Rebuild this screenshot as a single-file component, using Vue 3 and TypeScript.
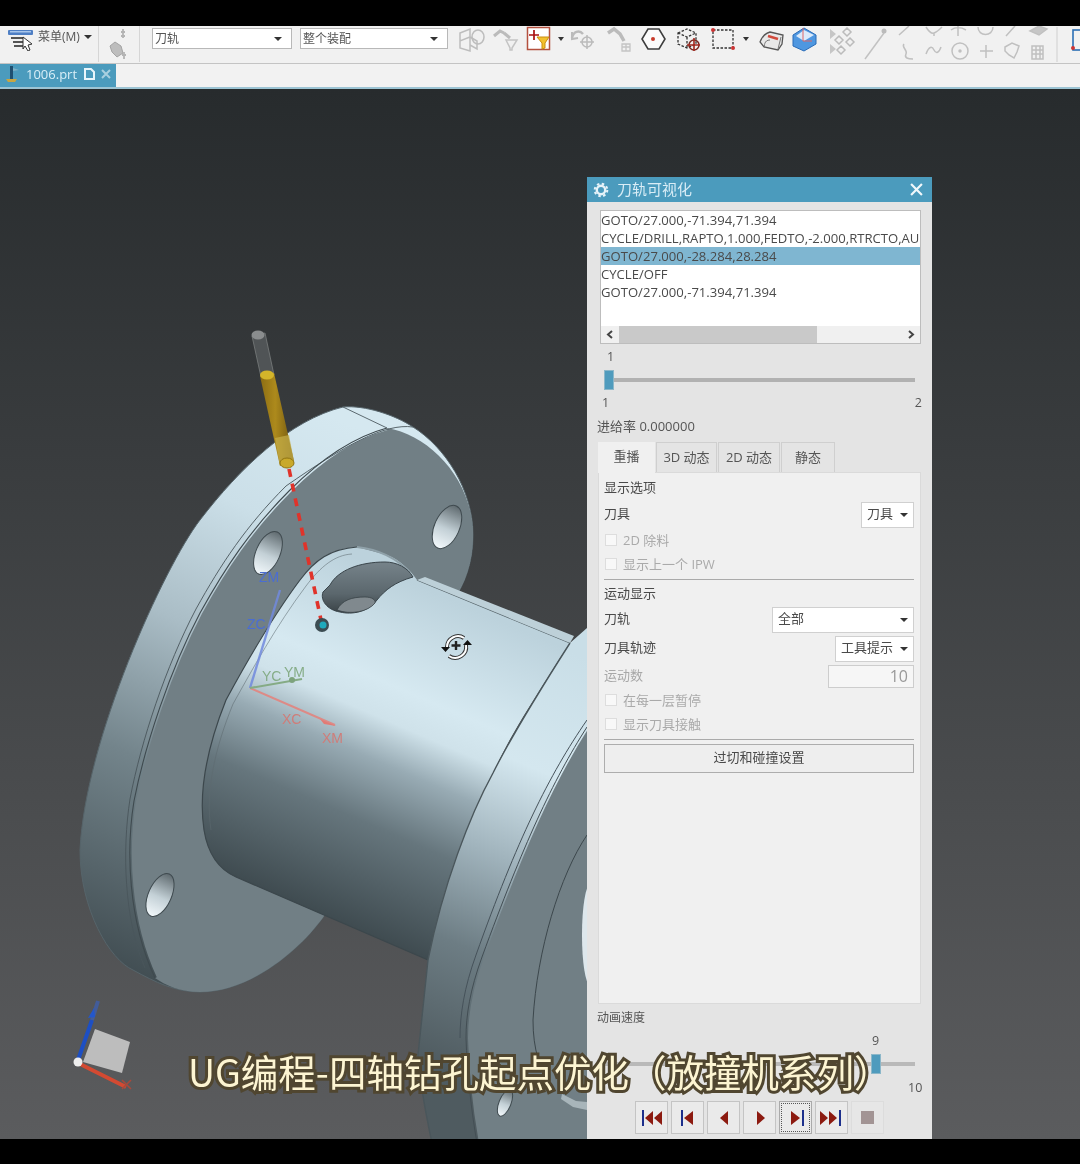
<script setup lang="ts">
interface Btn { d: string; blue: string; disabled?: boolean; focus?: boolean }
const rows: string[] = [
  'GOTO/27.000,-71.394,71.394',
  'CYCLE/DRILL,RAPTO,1.000,FEDTO,-2.000,RTRCTO,AU',
  'GOTO/27.000,-28.284,28.284',
  'CYCLE/OFF',
  'GOTO/27.000,-71.394,71.394'
]
const tabs: string[] = ['重播', '3D 动态', '2D 动态', '静态']
const buttons: Btn[] = [
  { d: 'M8 12l8-7v14zM17 12l8-7v14z', blue: 'M5 4h2v16H5z' },
  { d: 'M11 12l9-7v14z', blue: 'M8 4h2v16H8z' },
  { d: 'M11 12l8-7v14z', blue: '' },
  { d: 'M12 5l8 7-8 7z', blue: '' },
  { d: 'M10 5l9 7-9 7z', blue: 'M21 4h2v16h-2z', focus: true },
  { d: 'M3 5l8 7-8 7zM12 5l8 7-8 7z', blue: 'M22 4h2v16h-2z' },
  { d: '', blue: '', disabled: true }
]
</script>

<template>
  <div class="page">
    <div class="black top"></div>

    <div class="toolbar">
      <svg class="menu-icon" viewBox="0 0 26 22" width="26" height="22">
        <rect x="0" y="1" width="25" height="5" rx="1" fill="#4f7fc4" />
        <rect x="2" y="2" width="21" height="1.500" fill="#a9c6ea" />
        <path d="M3 9h13M5 13h10M6 17h9" stroke="#555" stroke-width="2" />
        <path d="M15 8l9 7-4 1 2 5-2 1-3-5-2 3z" fill="#fff" stroke="#333" />
      </svg>
      <span class="menu-text">菜单(M)</span>
      <span class="caret menu-caret"></span>
      <i class="vsep first"></i>
      <svg class="grey-icon" viewBox="0 0 18 32" width="18" height="32" fill="none">
        <path d="M14 1v9M12 4h4M12 8h4" stroke="#b4b4b4" stroke-width="1.800" />
        <path d="M1 18l5-4 6 4 2 7-6 4-5-5z" fill="#bdbdbd" stroke="#a4a4a4" />
        <path d="M15 24v7M13 27h4" stroke="#b4b4b4" stroke-width="1.800" />
      </svg>
      <i class="vsep second"></i>
      <div class="tcombo one"><span>刀轨</span><b class="caret"></b></div>
      <div class="tcombo two"><span>整个装配</span><b class="caret"></b></div>
      <svg class="strip" viewBox="457 26 623 38" width="623" height="38" fill="none">
        <g stroke="#bdbdbd" stroke-width="1.500">
          <path d="M460 33l10-4v8l-10 4zM470 37l7 4v8l-7-4zM460 41v7l10 3v-14" />
          <ellipse cx="478" cy="37" rx="6" ry="7" />
        </g>
        <path d="M494 36l6-5 4 2M504 33l6 5" stroke="#bbb" stroke-width="3" />
        <path d="M506 40h11l-5 8v2h-2v-2z" stroke="#c4c4c4" stroke-width="1.500" />
        <rect x="527.500" y="27.500" width="22" height="22" fill="#fff" stroke="#b4513f" stroke-width="1.500" />
        <path d="M534 30v10M529 35h10" stroke="#a11" stroke-width="1.700" />
        <path d="M537 37h12l-4 6v5l-3 1v-6z" fill="#f2c12e" stroke="#c98d12" />
        <path d="M558 37l3 4 3-4z" fill="#333" />
        <path d="M572 38c1-6 7-9 11-4" stroke="#bbb" stroke-width="2.400" />
        <path d="M572 32l0 7 6-1" stroke="#bbb" stroke-width="2" />
        <circle cx="587" cy="42" r="5" stroke="#bbb" stroke-width="1.500" />
        <path d="M587 35v14M580 42h14" stroke="#bbb" stroke-width="1.500" />
        <path d="M608 33l6-4 6 5 4 7" stroke="#bbb" stroke-width="3.500" />
        <path d="M622 44h8v7h-8zM626 44v7M622 47h8" stroke="#c4c4c4" stroke-width="1.300" />
        <path d="M648 29h11l6 10-6 10h-11l-6-10z" stroke="#3d3d3d" stroke-width="1.600" fill="#fbfbfb" />
        <circle cx="653" cy="39" r="2" fill="#c83a2a" />
        <path d="M678 33l9-4 9 4v11l-9 4-9-4zM678 33l9 4 9-4M687 37v11" stroke="#333" stroke-dasharray="2.500 1.500" stroke-width="1.300" />
        <circle cx="694" cy="45" r="5" stroke="#7a2a22" stroke-width="1.500" />
        <path d="M694 38v13M687 45h13" stroke="#a4281f" stroke-width="1.600" />
        <rect x="713" y="30" width="20" height="18" stroke="#333" stroke-dasharray="2.500 1.500" stroke-width="1.300" />
        <circle cx="713" cy="30" r="2" fill="#c33" /><circle cx="733" cy="48" r="2" fill="#c33" />
        <path d="M743 37l3 4 3-4z" fill="#333" />
        <path d="M760 42c2-5 6-9 10-10l13 3-1 9-4 6-14-3z" fill="#e8e8e8" stroke="#555" stroke-width="1.300" />
        <path d="M768 36l10 3" stroke="#d14a3c" stroke-width="2.500" />
        <path d="M770 40c-6 0-6 6-5 8M781 37l-3 12" stroke="#777" />
        <path d="M793 35l11-7 12 7v9l-12 7-11-5z" fill="#4f97e0" stroke="#2a6cb8" />
        <path d="M796 36l8 5 10-6-10-5z" fill="#dbeafa" />
        <path d="M803 28v13h9" stroke="#d66" />
        <path d="M830 29l6 5-6 5zM830 44l6 5-6 5z" fill="#c6c6c6" />
        <g stroke="#bbb" stroke-width="1.500"><path d="M847 28l4 4-4 4-4-4zM839 36l4 4-4 4-4-4zM850 38l4 4-4 4-4-4zM841 46l4 4-4 4-4-4z" /></g>
        <path d="M865 59l19-26" stroke="#c2c2c2" stroke-width="1.500" />
        <circle cx="884" cy="31" r="2.500" fill="#bbb" />
        <g stroke="#c0c0c0" stroke-width="1.500">
          <path d="M899 35l10-9M926 27c3 5 5 7 8 6s5-3 8-6M934 33v3M958 26v10M951 30c4-3 10-3 15 0M978 27c0 10 15 10 15 0M1006 36l9-10" />
          <path d="M1030 31l9-5 8 3-8 6z" fill="#c6c6c6" />
          <path d="M904 44c-3 3 4 6 2 10s2 5 7 5M926 54c3-8 6-8 8-4s5 3 7-3" />
          <circle cx="960" cy="51" r="8" /><circle cx="960" cy="51" r="1" fill="#bbb" />
          <path d="M980 51h13M986 45v13M1005 47l7-4 7 3-2 6-3 6-5-3-4-4z" />
          <path d="M1032 46h11v13h-11zM1032 50h11M1032 54h11M1036 46v13M1040 46v13" />
        </g>
        <path d="M1057 27v35" stroke="#cfcfcf" />
        <rect x="1073" y="30" width="8" height="20" stroke="#2b6fb5" stroke-width="1.600" />
        <circle cx="1073" cy="48" r="2" fill="#c33" />
      </svg>
    </div>

    <div class="tabstrip">
      <div class="filetab">
        <svg viewBox="0 0 18 18" width="18" height="18">
          <path d="M8 1h3v13H8z" fill="#1f4f6f" /><path d="M11 3l6 2-6 1z" fill="#7fb0c6" />
          <path d="M4 14h11l-2 3H6z" fill="#c8a642" />
        </svg>
        <span class="filename">1006.prt</span>
        <svg class="doc" viewBox="0 0 12 12" width="12" height="12" fill="none">
          <path d="M2 1h6l3 3v7H2z" stroke="#e8f5fb" stroke-width="2" />
        </svg>
        <svg class="tabx" viewBox="0 0 10 10" width="10" height="10">
          <path d="M1 1l8 8M9 1l-8 8" stroke="#a9d0e0" stroke-width="2" />
        </svg>
      </div>
    </div>

    <div class="viewport">
      <svg class="scene" viewBox="0 89 1080 1050" width="1080" height="1050" fill="none">
        <defs>
          <linearGradient id="bg" x1="0" y1="89" x2="0" y2="1139" gradientUnits="userSpaceOnUse">
            <stop offset="0" stop-color="#272b2d" /><stop offset="1" stop-color="#5b5c5e" />
          </linearGradient>
          <linearGradient id="rimA" x1="340" y1="420" x2="95" y2="960" gradientUnits="userSpaceOnUse">
            <stop offset="0" stop-color="#d5e8f0" /><stop offset=".2" stop-color="#cbdfe8" />
            <stop offset=".42" stop-color="#aabdc6" /><stop offset=".66" stop-color="#73848b" />
            <stop offset="1" stop-color="#414d52" />
          </linearGradient>
          <linearGradient id="hub" x1="480" y1="612" x2="345" y2="925" gradientUnits="userSpaceOnUse">
            <stop offset="0" stop-color="#bcd2dc" /><stop offset=".3" stop-color="#d6e9f1" />
            <stop offset=".4" stop-color="#cfe2ea" /><stop offset=".52" stop-color="#98abb4" />
            <stop offset=".7" stop-color="#66767d" /><stop offset="1" stop-color="#3f4b50" />
          </linearGradient>
          <linearGradient id="rimB" x1="590" y1="660" x2="420" y2="1060" gradientUnits="userSpaceOnUse">
            <stop offset="0" stop-color="#c9dee7" /><stop offset=".28" stop-color="#d4e7ef" />
            <stop offset=".5" stop-color="#a0b3bc" /><stop offset=".72" stop-color="#6d7d84" />
            <stop offset="1" stop-color="#4f5b60" />
          </linearGradient>
          <linearGradient id="hole" x1="0" y1="0" x2="0" y2="1">
            <stop offset="0" stop-color="#5f6a6f" /><stop offset=".55" stop-color="#c3d0d6" />
            <stop offset="1" stop-color="#f2f8fb" />
          </linearGradient>
          <linearGradient id="gold" x1="0" y1="0" x2="1" y2="0">
            <stop offset="0" stop-color="#8c6d13" /><stop offset=".45" stop-color="#ad8a1c" /><stop offset="1" stop-color="#6f5510" />
          </linearGradient>
          <linearGradient id="slot" x1="0" y1="562" x2="0" y2="615" gradientUnits="userSpaceOnUse">
            <stop offset="0" stop-color="#76838a" /><stop offset=".6" stop-color="#5b676d" /><stop offset="1" stop-color="#373f43" />
          </linearGradient>
        </defs>
        <rect x="0" y="89" width="1080" height="1050" fill="url(#bg)" />

        <!-- left flange -->
        <path d="M343 407C365 405 395 415 413 427C445 447 473 490 473 535C473 590 440 620 415 640L324 916C300 950 250 992 200 992C175 992 155 982 133 970C110 960 80 910 80 850C85 740 164 567 200 520C240 468 290 420 343 407Z" fill="url(#rimA)" stroke="#56646a" />
        <path d="M387 428C430 435 473 480 473 535C473 590 440 620 415 640L324 916C300 950 250 992 200 992C180 992 165 985 155 978C128 920 126 850 134 801C145 745 170 670 200 613C225 568 250 530 290 490C318 462 350 438 387 428Z" fill="#717f85" />
        <path d="M155 978C128 920 126 850 134 801C145 745 170 670 200 613C225 568 250 530 290 490C318 462 350 438 387 428" stroke="url(#rimA)" stroke-width="4" />
        <path d="M413 427C385 423 345 445 286 486C246 526 221 564 196 609C166 666 141 741 130 799C122 850 124 920 145 968" stroke="#4a565b" stroke-width=".9" />
        <path d="M155 978C128 920 126 850 134 801C145 745 170 670 200 613C225 568 250 530 290 490C318 462 350 438 387 428" stroke="#3f4a4f" stroke-width="1.100" />
        <path d="M343 407L387 428" stroke="#5c6a70" />
        <g>
          <ellipse cx="268" cy="553" rx="12" ry="23" transform="rotate(24 268 553)" fill="url(#hole)" stroke="#3f4a4f" />
          <ellipse cx="447" cy="527" rx="12.500" ry="23" transform="rotate(24 447 527)" fill="url(#hole)" stroke="#3f4a4f" />
          <ellipse cx="160" cy="895" rx="11.500" ry="23" transform="rotate(24 160 895)" fill="url(#hole)" stroke="#3f4a4f" />
        </g>

        <!-- hub -->
        <path d="M357 547C330 549 315 560 300 580C270 620 245 665 226 700C208 745 198 790 204 830C208 855 220 870 236 877L428 960L443 900C460 860 475 815 493 773C503 752 512 735 523 717C540 690 555 665 570 643L417 580C410 570 400 560 387 555Z" fill="url(#hub)" />
        <path d="M357 547C330 549 315 560 300 580C270 620 245 665 226 700C208 745 198 790 204 830C208 855 220 870 236 877L428 960" stroke="#3c474c" stroke-width="1.200" />
        <path d="M352 554C335 555 321 566 306 586C276 626 252 670 233 704C215 748 205 792 211 830" stroke="#5c6a70" stroke-width="1" opacity=".55" />
        <path d="M417 580L570 643" stroke="#56646a" stroke-width="1.200" />
        <path d="M425 577L574 636L570 643L417 580Z" fill="#bdd0d8" />
        <path d="M357 547C375 549 395 556 410 573" stroke="#8fa1a9" stroke-width="2" />
        <path d="M330 585C338 570 360 562 385 562C397 562 408 568 413 577C395 582 385 590 377 600C368 612 352 615 340 612C327 610 320 600 323 592Z" fill="url(#slot)" stroke="#39444a" />
        <path d="M337 610C342 600 352 597 365 597C372 597 376 600 375 603C368 612 350 615 337 610Z" fill="#80898e" stroke="#333d42" stroke-width=".7" />

        <!-- right flange -->
        <path d="M587 628L570 643C540 690 512 735 493 773C470 815 443 885 428 960L418 1055C420 1085 426 1115 432 1143H587Z" fill="url(#rimB)" />
        <path d="M570 643C540 690 512 735 493 773C470 815 443 885 428 960L418 1055C420 1085 426 1115 432 1143" stroke="#4a565b" stroke-width="1.400" />
        <path d="M587 727C553 780 523 845 482 957C470 990 466 1015 466 1038C467 1070 471 1110 477 1143H587Z" fill="#717f85" />
        <path d="M587 727C553 780 523 845 482 957C470 990 466 1015 466 1038C467 1070 471 1110 477 1143" stroke="url(#rimB)" stroke-width="4" />
        <path d="M587 720C549 775 517 840 476 955C464 988 460 1015 460 1038" stroke="#46525a" stroke-width="1" />
        <path d="M587 727C553 780 523 845 482 957C470 990 466 1015 466 1038C467 1070 471 1110 477 1143" stroke="#434e54" stroke-width="1" />
        <path d="M587 835C560 875 537 950 533 1020C533 1050 540 1070 552 1088" stroke="#3c474c" stroke-width="1" />
        <ellipse cx="590" cy="935" rx="8" ry="50" fill="#dde7ec" />
        <path d="M562 1094l14 7 11 1v8l-14-3-12-8z" fill="#a8b5ba" />
        <ellipse cx="505" cy="1103" rx="6" ry="14" transform="rotate(22 505 1103)" fill="url(#hole)" stroke="#3f4a4f" />

        <!-- tool -->
        <path d="M252 336L265 333L274 375L261 377Z" fill="#505456" stroke="#7a7d7e" stroke-width=".8" />
        <ellipse cx="258" cy="335" rx="6.500" ry="4.500" fill="#8a8d8e" />
        <path d="M260 376L274 373L294 461L280 466Z" fill="url(#gold)" />
        <path d="M275 438L289 435L294 461L280 466Z" fill="#c7b04a" opacity=".7" />
        <ellipse cx="267" cy="375" rx="7" ry="4.500" fill="#d4b52a" />
        <ellipse cx="287" cy="463" rx="7" ry="5" fill="#c9a92a" stroke="#8f7412" />

        <path d="M289 469L321 620" stroke="#e0332a" stroke-width="3.600" stroke-dasharray="8 7" />
        <circle cx="322" cy="625" r="7" fill="#3c4c52" />
        <circle cx="323" cy="625" r="3.500" fill="#1fa9bb" />

        <!-- WCS -->
        <path d="M250 688L280 590" stroke="#7189dd" stroke-width="2.400" opacity=".85" />
        <path d="M250 688L335 725" stroke="#dd8a86" stroke-width="2" />
        <path d="M250 688L302 679" stroke="#85ab85" stroke-width="2" />
        <path d="M320 719L336 726L324 724Z" fill="#e27b75" />
        <circle cx="292" cy="680" r="3" fill="#7da37d" />
        <g class="wcs">
          <text x="259" y="582" fill="#4a6dd2">ZM</text>
          <text x="247" y="629" fill="#4a6dd2">ZC</text>
          <text x="262" y="681" fill="#86ad88">YC</text>
          <text x="284" y="677" fill="#86ad88">YM</text>
          <text x="282" y="724" fill="#cf7d79">XC</text>
          <text x="322" y="743" fill="#cf7d79">XM</text>
        </g>

        <!-- rotate cursor -->
        <g>
          <path d="M447 647a11 11 0 0 1 17-9M466 645a11 11 0 0 1-17 11" stroke="#333" stroke-width="4" />
          <path d="M447 647a11 11 0 0 1 17-9M466 645a11 11 0 0 1-17 11" stroke="#fff" stroke-width="2" />
          <path d="M441 647h9l-4.500 5zM463 645h9l-4.500-5z" fill="#111" />
          <path d="M456 641v9M451.500 645.500h9" stroke="#222" stroke-width="2.400" />
        </g>

        <!-- gizmo -->
        <path d="M95 1029L130 1042L122 1073L83 1062Z" fill="#bdbdbd" />
        <path d="M78 1060L92 1020" stroke="#1d4fc4" stroke-width="4" />
        <path d="M92 1020L98 1001" stroke="#3c5fb0" stroke-width="4" opacity=".75" />
        <path d="M88 1018l7-1 -1-9z" fill="#2357cc" />
        <path d="M80 1064L126 1087" stroke="#d44a32" stroke-width="4" />
        <path d="M122 1080l9 9M131 1080l-9 9" stroke="#a8493b" stroke-width="1.600" />
        <circle cx="78" cy="1062" r="4.500" fill="#eee" />
      </svg>

      <section class="dialog">
        <header class="dlg-title">
          <svg viewBox="0 0 16 16" width="16" height="16" fill="none">
            <circle cx="8" cy="8" r="4.200" stroke="#e6f3f9" stroke-width="2.400" />
            <circle cx="8" cy="8" r="6.300" stroke="#e6f3f9" stroke-width="2" stroke-dasharray="2.500 2.450" />
          </svg>
          <span>刀轨可视化</span>
          <svg class="dlg-close" viewBox="0 0 12 12" width="13" height="13">
            <path d="M1 1l10 10M11 1L1 11" stroke="#f1f8fb" stroke-width="2" />
          </svg>
        </header>

        <div class="listbox">
          <div class="rows">
            <div v-for="(r, i) in rows" :key="i" class="row" :class="{ sel: i === 2 }">{{ r }}</div>
          </div>
          <div class="hscroll">
            <svg class="chev" viewBox="0 0 18 17" width="18" height="17" fill="none">
              <path d="M11 5L7 8.500 11 12" stroke="#444" stroke-width="2" />
            </svg>
            <i class="thumb"></i>
            <svg class="chev right" viewBox="0 0 18 17" width="18" height="17" fill="none">
              <path d="M7 5l4 3.500L7 12" stroke="#444" stroke-width="2" />
            </svg>
          </div>
        </div>

        <div class="num first-num">1</div>
        <div class="slider"><i class="track"></i><i class="knob"></i></div>
        <div class="num ends"><span>1</span><span>2</span></div>
        <div class="feed">进给率 0.000000</div>

        <div class="tabs">
          <div v-for="(t, i) in tabs" :key="t" class="tab" :class="[`t${i}`, { active: i === 0 }]">{{ t }}</div>
        </div>

        <div class="panel">
          <div class="line first-line">显示选项</div>
          <div class="ctl-row r1">
            <span class="lab">刀具</span>
            <div class="combo c-tool"><span class="lab">刀具</span><b class="caret"></b></div>
          </div>
          <div class="check c1"><i></i><span>2D 除料</span></div>
          <div class="check c2"><i></i><span>显示上一个 IPW</span></div>
          <hr class="sep s1" />
          <div class="line l2">运动显示</div>
          <div class="ctl-row r2">
            <span class="lab">刀轨</span>
            <div class="combo c-path"><span class="lab">全部</span><b class="caret"></b></div>
          </div>
          <div class="ctl-row r3">
            <span class="lab">刀具轨迹</span>
            <div class="combo c-trace"><span class="lab">工具提示</span><b class="caret"></b></div>
          </div>
          <div class="ctl-row r4 off">
            <span class="lab short">运动数</span>
            <div class="numbox">10</div>
          </div>
          <div class="check c3"><i></i><span>在每一层暂停</span></div>
          <div class="check c4"><i></i><span>显示刀具接触</span></div>
          <hr class="sep s2" />
          <div class="wide-btn">过切和碰撞设置</div>
        </div>

        <div class="speed">动画速度</div>
        <div class="num nine">9</div>
        <div class="slider second-slider"><i class="track"></i><i class="knob"></i></div>
        <div class="num ten">10</div>

        <div class="transport">
          <div v-for="(b, i) in buttons" :key="i" class="tbtn" :class="{ disabled: b.disabled, focus: b.focus }">
            <svg v-if="!b.disabled" viewBox="0 0 30 24" width="30" height="24">
              <path :d="b.d" fill="#8c1a10" />
              <path v-if="b.blue" :d="b.blue" fill="#1c2f8c" />
            </svg>
            <i v-else class="stop"></i>
          </div>
        </div>
      </section>

      <div class="subtitle">UG编程-四轴钻孔起点优化（放撞机系列）</div>
    </div>

    <div class="black bottom"></div>
  </div>
</template>

<style>
html, body { margin: 0; background: #000; }
</style>

<style scoped>
.page {
  width: 1080px;
  height: 1164px;
  display: flex;
  flex-direction: column;
  overflow: hidden;
  font-family: "Open Sans", "Noto Sans CJK SC", sans-serif;
  font-size: 13px;
  color: #4a4a4a;
  filter: blur(0.4px);
}
.black { background: #000; flex: none; }
.top { height: 26px; }
.bottom { height: 25px; }

.toolbar {
  flex: none;
  height: 38px;
  box-sizing: border-box;
  background: #f1f1f1;
  border-bottom: 1px solid #c4c4c4;
  display: flex;
  align-items: flex-start;
}
.toolbar > * { flex: none; }
.menu-icon { margin: 3px 0 0 8px; }
.menu-text { width: 43px; margin: 2px 0 0 4px; font-size: 12px; color: #555; line-height: 18px; white-space: nowrap; }
.caret {
  display: inline-block;
  width: 0;
  height: 0;
  border: 4px solid transparent;
  border-top: 4.500px solid #333;
  border-bottom: 0;
}
.menu-caret { margin: 9px 0 0 3px; }
.vsep { width: 1px; height: 36px; background: #d6d6d6; }
.vsep.first { margin-left: 6px; }
.grey-icon { margin: 2px 0 0 10px; }
.vsep.second { margin-left: 12px; }
.tcombo {
  height: 21px;
  box-sizing: border-box;
  background: #fff;
  border: 1px solid #b8b8b8;
  display: flex;
  align-items: center;
  justify-content: space-between;
  padding: 0 9px 0 2px;
  margin-top: 2px;
  color: #555;
  font-size: 12px;
}
.tcombo span { margin-bottom: 2px; }
.tcombo.one { width: 140px; margin-left: 12px; }
.tcombo.two { width: 148px; margin-left: 8px; }
.strip { margin-left: 9px; margin-top: 0; }

.tabstrip {
  flex: none;
  height: 25px;
  box-sizing: border-box;
  background: #f2f2f2;
  border-bottom: 2px solid #9cc4d4;
  display: flex;
}
.filetab {
  width: 116px;
  height: 23px;
  background: #4b9bbd;
  display: flex;
  align-items: center;
  padding: 0 0 3px 2px;
  box-sizing: border-box;
  color: #d8eef7;
}
.filename { margin-left: 6px; font-size: 13px; }
.doc { margin-left: 6px; }
.tabx { margin-left: 6px; }

.viewport { flex: 1; position: relative; overflow: hidden; }
.scene { position: absolute; left: 0; top: 0; display: block; }
.wcs text { font: 14px "Liberation Sans", sans-serif; }

.dialog {
  position: absolute;
  left: 587px;
  top: 88px;
  width: 345px;
  bottom: 0;
  background: #e4e4e4;
  box-sizing: border-box;
  display: flex;
  flex-direction: column;
  overflow: hidden;
}
.dlg-title {
  flex: none;
  height: 25px;
  background: #4b9bbd;
  display: flex;
  align-items: center;
  padding: 0 9px 0 6px;
  color: #d9edf6;
  font-size: 15px;
}
.dlg-title span { margin: 0 0 3px 8px; }
.dlg-close { margin-left: auto; }

.listbox {
  flex: none;
  margin: 8px 11px 0 13px;
  height: 134px;
  box-sizing: border-box;
  background: #fff;
  border: 1px solid #bdbdbd;
  display: flex;
  flex-direction: column;
}
.rows { flex: 1; overflow: hidden; }
.row {
  height: 18px;
  line-height: 19px;
  white-space: nowrap;
  font-size: 13.100px;
  color: #4a4a4a;
}
.row.sel { background: #7fb6d1; }
.hscroll {
  flex: none;
  height: 17px;
  background: #f0f0f0;
  display: flex;
  align-items: center;
}
.chev.right { margin-left: auto; }
.thumb { width: 198px; height: 17px; background: #c9c9c9; }

.num { flex: none; height: 18px; line-height: 18px; font-size: 12.500px; color: #555; }
.first-num { margin: 4px 0 0 20px; }
.slider { flex: none; position: relative; height: 20px; margin-top: 4px; }
.track { position: absolute; left: 18px; right: 17px; top: 8px; height: 4px; background: #b1b1b1; }
.knob { position: absolute; left: 17px; top: 0; width: 10px; height: 20px; background: #4f9bbd; border: 1px solid #8cb7c9; box-sizing: border-box; }
.ends { display: flex; justify-content: space-between; margin: 4px 10px 0 15px; }
.feed { flex: none; height: 18px; line-height: 16px; margin: 6px 0 0 10px; color: #555; }

.tabs { flex: none; display: flex; height: 30px; margin: 6px 0 0 11px; }
.tab {
  box-sizing: border-box;
  border: 1px solid #cfcfcf;
  border-bottom: 0;
  background: #e4e4e4;
  text-align: center;
  line-height: 29px;
  color: #555;
  margin-right: 1px;
}
.t0 { width: 57px; }
.t1 { width: 61px; }
.t2 { width: 62px; }
.t3 { width: 54px; }
.tab.active { background: #f0f0f0; border-color: #f0f0f0; line-height: 27px; position: relative; z-index: 1; margin-bottom: -1px; height: 31px; }

.panel {
  flex: none;
  margin: 0 11px 0 11px;
  height: 532px;
  box-sizing: border-box;
  background: #f0f0f0;
  border: 1px solid #dadada;
  padding: 6px 6px 0 5px;
  display: flex;
  flex-direction: column;
}
.line { flex: none; height: 18px; line-height: 16px; }
.l2 { margin-top: 5px; }
.ctl-row { flex: none; height: 26px; display: flex; align-items: center; justify-content: space-between; }
.lab { margin-bottom: 6px; }
.lab.short { margin-bottom: 4px; }
.r1 { margin-top: 5px; }
.r2 { margin-top: 4px; }
.r3 { margin-top: 3px; }
.r4 { margin-top: 3px; height: 23px; }
.off { color: #a8a8a8; }
.combo {
  height: 26px;
  box-sizing: border-box;
  background: #fff;
  border: 1px solid #d0d0d0;
  display: flex;
  align-items: center;
  justify-content: space-between;
  padding: 0 5px;
}
.c-tool { width: 53px; }
.c-path { width: 142px; }
.c-trace { width: 79px; }
.numbox {
  width: 86px;
  height: 23px;
  box-sizing: border-box;
  background: #f6f6f6;
  border: 1px solid #cdcdcd;
  text-align: right;
  padding-right: 5px;
  font-size: 16px;
  line-height: 21px;
  color: #999;
}
.check { flex: none; height: 18px; display: flex; align-items: center; color: #aaa; }
.check i { width: 12px; height: 12px; box-sizing: border-box; margin: 0 0 3px 1px; border: 1px solid #ddd; background: #f8f8f8; }
.check span { margin: 0 0 4px 6px; }
.c1 { margin-top: 4px; }
.c2 { margin-top: 6px; }
.c3 { margin-top: 4px; }
.c4 { margin-top: 6px; }
.sep { flex: none; width: 100%; height: 1px; border: 0; background: #aaa; margin: 0; }
.s1 { margin-top: 5px; }
.s2 { margin-top: 5px; }
.wide-btn {
  flex: none;
  height: 29px;
  margin-top: 4px;
  box-sizing: border-box;
  border: 1px solid #adadad;
  background: #eee;
  text-align: center;
  line-height: 25px;
}

.speed { flex: none; height: 18px; line-height: 18px; margin: 5px 0 0 10px; font-size: 12px; color: #555; }
.nine { margin: 5px 0 0 285px; align-self: flex-start; }
.second-slider { margin-top: 4px; }
.second-slider .knob { left: 284px; }
.second-slider .track { background: #b9b9b9; }
.ten { margin: 5px 0 0 321px; }

.transport { flex: none; display: flex; gap: 3px; height: 33px; margin: 4px 0 0 48px; }
.tbtn {
  width: 33px;
  height: 33px;
  box-sizing: border-box;
  border: 1px solid #c4c4c4;
  background: #eaeaea;
  display: flex;
  align-items: center;
  justify-content: center;
}
.tbtn.focus { outline: 1px dotted #555; outline-offset: -3px; border-color: #aaa; }
.tbtn.disabled { background: #e6e6e6; border-color: #dcdcdc; }
.stop { width: 13px; height: 13px; background: #a29494; }

.subtitle {
  position: absolute;
  left: 188px;
  top: 963px;
  white-space: nowrap;
  font-family: "Noto Sans CJK SC", "Noto Sans", sans-serif;
  font-size: 37.500px;
  line-height: 38px;
  color: #fdf5d2;
  -webkit-text-stroke: 6px #504630;
  paint-order: stroke fill;
}
</style>
